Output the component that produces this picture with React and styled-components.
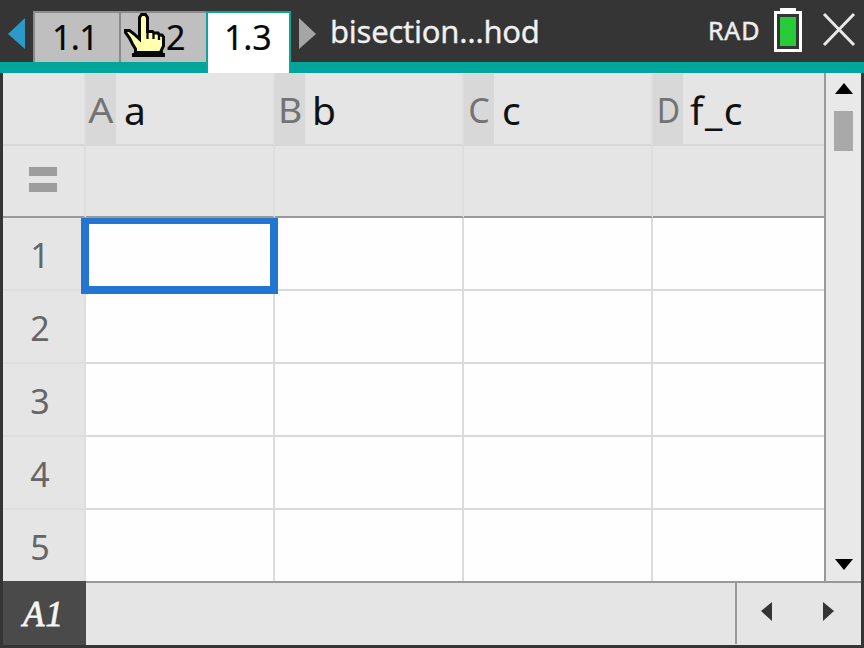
import React from 'react';
import styled, { createGlobalStyle } from 'styled-components';

const GlobalStyle = createGlobalStyle`
  * { box-sizing: border-box; }
  body { margin: 0; overflow: hidden; background: #353535; font-family: "Noto Sans", "Open Sans", sans-serif; }
`;

const Screen = styled.div`
  width: 864px;
  height: 648px;
  display: flex;
  flex-direction: column;
  background: #353535;
`;

const TopBar = styled.header`
  display: flex;
  height: 73px;
  background: linear-gradient(#353535 62px, #00a59b 62px);
`;

const TabArrow = styled.svg`
  flex: none;
  display: block;
  width: ${p => p.$width}px;
  height: 62px;
`;

const Tab = styled.div`
  position: relative;
  flex: none;
  width: ${p => p.$width}px;
  height: ${p => (p.$active ? 62 : 51)}px;
  margin-top: 11px;
  padding-left: ${p => p.$indent}px;
  background: ${p => (p.$active ? '#fff' : '#bfbfbf')};
  border: 2px solid ${p => (p.$active ? '#10a59a' : '#8b8b8b')};
  border-right-width: ${p => (p.$active ? 2 : 0)}px;
  border-bottom: 0;
  color: #080808;
  font-size: 34px;
  line-height: 48px;
  letter-spacing: ${p => (p.$active ? -0.2 : -0.7)}px;
  -webkit-text-stroke: 0.2px #080808;
  white-space: pre;
`;

const HandCursor = styled.svg`
  position: absolute;
  left: 3px;
  top: 0;
  width: 43px;
  height: 45px;
`;

const DocumentName = styled.div`
  flex: 1;
  padding-left: 12px;
  color: #f0f0f0;
  font-size: 31px;
  line-height: 63px;
  height: 62px;
  letter-spacing: -0.25px;
  -webkit-text-stroke: 0.3px #f0f0f0;
  white-space: nowrap;
`;

const AngleMode = styled.div`
  width: 66px;
  height: 62px;
  color: #ededed;
  font-size: 25px;
  line-height: 61px;
  letter-spacing: 0.8px;
  -webkit-text-stroke: 0.5px #ededed;
`;

const StatusIcons = styled.svg`
  display: block;
  width: 90px;
  height: 62px;
`;

const Workspace = styled.main`
  display: flex;
  height: 508px;
  margin: 0 3px;
`;

const Sheet = styled.div`
  display: grid;
  grid-template-columns: 83px 189px 189px 189px 171px;
  grid-template-rows: 73px 72px 73px 73px 73px 73px 71px;
  width: 821px;
  height: 508px;
  background: #fefefe;
`;

const Cell = styled.div`
  position: relative;
  border-right: ${p => (p.$last ? 0 : 2)}px solid ${p => (p.$shade ? '#dedede' : '#dcdcdc')};
  border-bottom: ${p => (p.$end ? 0 : 2)}px solid ${p => (p.$divider ? '#999' : '#dadada')};
  background: ${p => (p.$shade ? '#e5e5e5' : '#fefefe')};
`;

const HeadCell = styled(Cell)`
  display: flex;
  border-bottom-color: #d7d7d7;
  border-right-color: #dedede;
  color: #111;
  font-size: 39px;
  line-height: 74px;
  letter-spacing: 1.5px;
`;

const ColumnLetter = styled.span`
  flex: none;
  width: 30px;
  margin-right: ${p => p.$gap}px;
  background: #d8d8d8;
  color: #737373;
  font-size: 34px;
  letter-spacing: 0;
  text-align: center;
`;

const LetterGlyph = styled.span`
  display: inline-block;
  transform: scaleX(${p => p.$stretch});
`;

const RowHead = styled(Cell)`
  padding-right: 7px;
  color: #666;
  font-size: 34px;
  line-height: 74px;
  text-align: center;
  border-bottom-color: #dedede;
`;

const FormulaHead = styled(Cell)`
  display: flex;
  flex-direction: column;
  align-items: center;
  justify-content: center;
  gap: 7px;
  padding: 0 1px 4px 0;
`;

const EqualBar = styled.span`
  width: 28px;
  height: 9px;
  background: #9d9d9d;
`;

const Selection = styled.div`
  position: absolute;
  z-index: 1;
  left: -5px;
  top: 0;
  width: 197px;
  height: 76px;
  border: solid #2475cf;
  border-width: 6px 8px 8px;
`;

const VerticalScroll = styled.div`
  display: flex;
  flex-direction: column;
  align-items: center;
  width: 37px;
  border-left: 2px solid #999;
  background: #e8e9e8;
`;

const ScrollThumb = styled.div`
  width: 19px;
  height: 40px;
  margin-top: 17px;
  margin-bottom: auto;
  background: #a9a9a9;
`;

const ScrollArrow = styled.svg`
  display: block;
  width: 18px;
  height: 11px;
  margin: ${p => (p.$down ? '0 0 11px' : '10px 0 0')};
  transform: ${p => (p.$down ? 'rotate(180deg)' : 'none')};
`;

const Footer = styled.footer`
  display: flex;
  height: 64px;
  margin: 0 3px 3px;
`;

const CellName = styled.div`
  width: 83px;
  padding-left: 20px;
  background: #4a4a4a;
  color: #f5f5f5;
  font: italic 400 35px/68px "Liberation Serif", serif;
  letter-spacing: 1px;
  -webkit-text-stroke: 0.8px #f5f5f5;
`;

const EntryLine = styled.div`
  flex: 1;
  background: #e5e5e5;
  border-top: 2px solid #999;
`;

const HorizontalScroll = styled.div`
  width: 126px;
  background: #e5e5e5;
  border-top: 2px solid #999;
`;

const ScrollButtons = styled.svg`
  display: block;
  width: 126px;
  height: 62px;
`;

const columns = [
  { letter: 'A', name: 'a', gap: 8, stretch: 1.16 },
  { letter: 'B', name: 'b', gap: 7, stretch: 1.1 },
  { letter: 'C', name: 'c', gap: 8, stretch: 1 },
  { letter: 'D', name: 'f_c', gap: 7, stretch: 0.94 },
];
const rows = [1, 2, 3, 4, 5];

function Hand() {
  return (
    <HandCursor viewBox="0 0 43 45">
      <path
        d="M17.5 1.5h4l2 3v14h5l1.500 1.500h4L35.500 22h2.500l1.500 2v9L37 38v3H11.500v-5L8.500 31l-3-6-4-5.500V17.500h4L10 21l5.500 5V4.500z"
        fill="#ffffae"
        stroke="#080808"
        strokeWidth="3"
      />
      <path d="M23.500 18v8M29.500 20v6M35 22v5" stroke="#080808" strokeWidth="2.3" />
      <path d="M10 38h29v2h2v4H8v-4h2z" fill="#080808" />
    </HandCursor>
  );
}

export default function App() {
  return (
    <Screen>
      <GlobalStyle />
      <TopBar>
        <TabArrow $width={33} viewBox="0 0 33 62"><path d="M8 34 25 18v31z" fill="#2c99c7" /></TabArrow>
        <Tab $width={86} $indent={17}>1.1</Tab>
        <Tab $width={87} $indent={45}><Hand />2</Tab>
        <Tab $active $width={85} $indent={16}>1.3</Tab>
        <TabArrow $width={27} viewBox="0 0 27 62"><path d="M8 18 25 34 8 49z" fill="#a5a5a5" /></TabArrow>
        <DocumentName>bisection…hod</DocumentName>
        <AngleMode>RAD</AngleMode>
        <StatusIcons viewBox="0 0 90 62">
          <path d="M6 8h16v3h6v41H0V11h6z" fill="#fff" />
          <path d="M3 14h22v35H3z" fill="#353535" />
          <path d="M6 17h16v29H6z" fill="#28cb38" />
          <path d="m50 14 30 31M80 14 50 45" stroke="#e8e8e8" strokeWidth="3" />
        </StatusIcons>
      </TopBar>
      <Workspace>
        <Sheet>
          <HeadCell $shade />
          {columns.map((c, i) => (
            <HeadCell key={c.letter} $shade $last={i === 3}>
              <ColumnLetter $gap={c.gap}>
                <LetterGlyph $stretch={c.stretch}>{c.letter}</LetterGlyph>
              </ColumnLetter>
              {c.name}
            </HeadCell>
          ))}
          <FormulaHead $shade $divider><EqualBar /><EqualBar /></FormulaHead>
          {columns.map((c, i) => <Cell key={c.letter} $shade $divider $last={i === 3} />)}
          {rows.map(row => (
            <React.Fragment key={row}>
              <RowHead $shade $end={row === 5}>{row}</RowHead>
              {columns.map((c, i) => (
                <Cell key={c.letter} $last={i === 3} $end={row === 5}>
                  {row === 1 && i === 0 && <Selection />}
                </Cell>
              ))}
            </React.Fragment>
          ))}
        </Sheet>
        <VerticalScroll>
          <ScrollArrow viewBox="0 0 18 11"><path d="M9 0 18 11H0z" /></ScrollArrow>
          <ScrollThumb />
          <ScrollArrow $down viewBox="0 0 18 11"><path d="M9 0 18 11H0z" /></ScrollArrow>
        </VerticalScroll>
      </Workspace>
      <Footer>
        <CellName>A1</CellName>
        <EntryLine />
        <HorizontalScroll>
          <ScrollButtons viewBox="0 0 126 62">
            <path d="M0 0h2v61H0z" fill="#999" />
            <path d="M26 28 37 19v19zM88 19l11 9-11 10z" fill="#353535" />
          </ScrollButtons>
        </HorizontalScroll>
      </Footer>
    </Screen>
  );
}
